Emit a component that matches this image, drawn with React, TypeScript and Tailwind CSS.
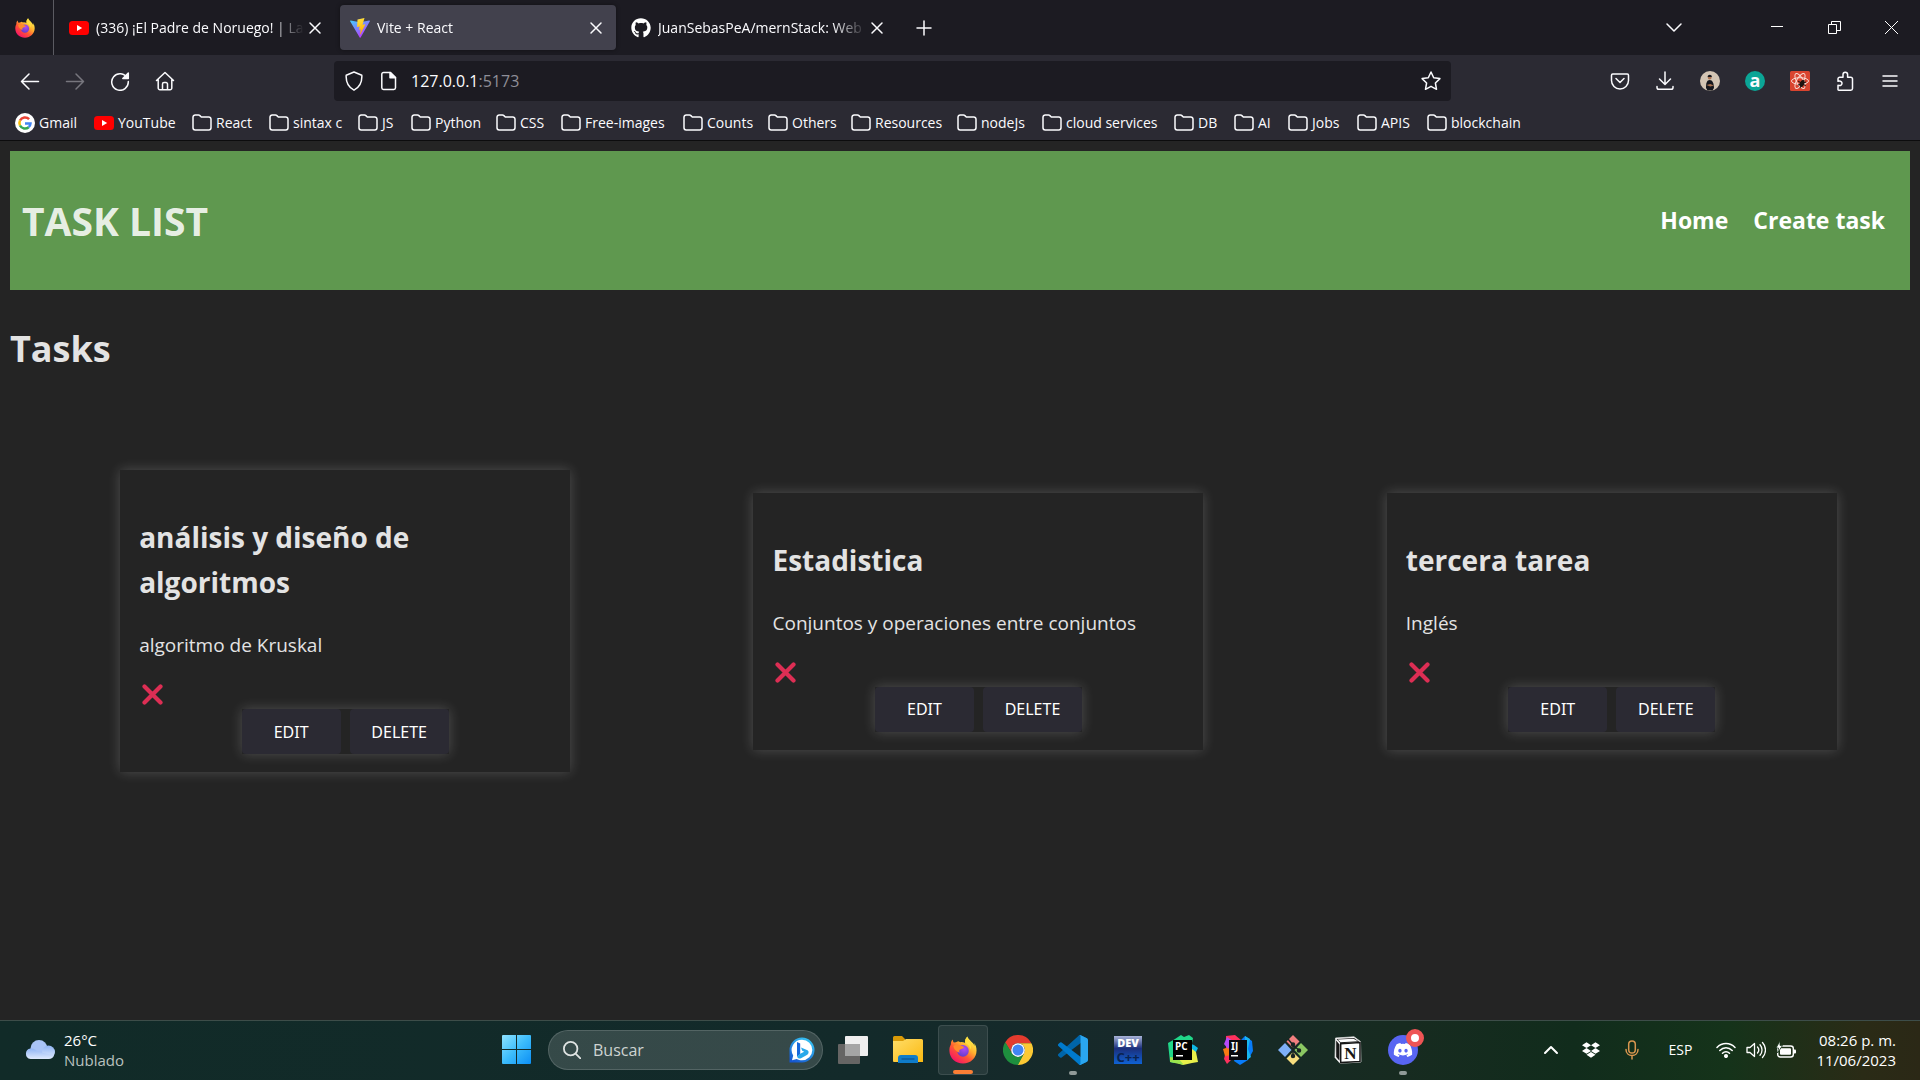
import React from 'react';
import { FaGithub, FaDropbox, FaDiscord } from 'react-icons/fa';

/* ---------- logos ---------- */

function Firefox({ className, id }: { className: string; id: string }) {
  return (
    <svg viewBox="0 0 32 32" className={className} aria-hidden="true">
      <defs>
        <linearGradient id={id + 'a'} x1="0.85" y1="0.1" x2="0.2" y2="0.95">
          <stop offset="0" stopColor="#fff44f" />
          <stop offset="0.35" stopColor="#ffb02e" />
          <stop offset="0.62" stopColor="#ff5634" />
          <stop offset="1" stopColor="#f5106a" />
        </linearGradient>
        <radialGradient id={id + 'b'} cx="0.6" cy="0.3" r="0.8">
          <stop offset="0" stopColor="#b24bf5" />
          <stop offset="1" stopColor="#5b3bc4" />
        </radialGradient>
      </defs>
      <path
        fill={'url(#' + id + 'a)'}
        d="M21 0.5C18.5 3 18 5.5 18.6 8c-2-1-3.600-1.200-5.600-1L10.500 6C8.700 7 7 7.500 5.500 7.500 4.600 6.500 4.300 5 4.500 4 2.500 5.500 2 7.500 2.200 9.500.8 12 .3 14.500.5 17.500.8 25.500 7.500 31.500 16 31.500S31.500 25 31.500 16.500c0-3.500-1-6.500-3-8.500.6 1.300.8 2.300.8 3.500C27.500 6.500 22.500 5 21 .5z"
      />
      <circle cx="16" cy="17" r="6.600" fill={'url(#' + id + 'b)'} />
      <path fill="#ff8a2b" d="M5 11.500c2.500-2 6-2 8.500-.5 1.800.2 3 .8 3.800 1.800-1 1.500-2.300 1.800-4 2.200-1.800.6-2 2.500-1 4-3-.5-6.500-3-7.300-7.500z" />
      <path fill="#ffdf3d" d="M18.600 8c2.500 1 5.400 3.500 5.900 7.500 1.500-3 .5-7-2-9.500-1.500-1.500-2-3-1.500-5.500-2.500 2.500-3 5-2.400 7.500z" />
    </svg>
  );
}

function YouTube() {
  return (
    <svg viewBox="0 0 20 20" className="size-5 shrink-0" aria-hidden="true">
      <rect y="3" width="20" height="14" rx="3.500" fill="#f00" />
      <path d="M8 7l5.200 3L8 13z" fill="#fff" />
    </svg>
  );
}

function ViteLogo() {
  return (
    <svg viewBox="0 0 32 32" className="size-5 shrink-0" aria-hidden="true">
      <defs>
        <linearGradient id="viteA" x1="0" y1="0" x2="0.6" y2="1">
          <stop offset="0" stopColor="#41d1ff" />
          <stop offset="1" stopColor="#bd34fe" />
        </linearGradient>
        <linearGradient id="viteB" x1="0.4" y1="0" x2="0.6" y2="1">
          <stop offset="0" stopColor="#ffea83" />
          <stop offset="0.1" stopColor="#ffdd35" />
          <stop offset="1" stopColor="#ffa800" />
        </linearGradient>
      </defs>
      <path fill="url(#viteA)" d="M31.800 5.200L17 31.300c-.3.600-1.200.6-1.500 0L.2 5.200c-.4-.6.2-1.300.9-1.200L16 6.800 30.900 4c.7-.1 1.200.6.900 1.200z" />
      <path fill="url(#viteB)" d="M23 0L12.300 2.200c-.2 0-.3.200-.3.400L11.300 13.800c0 .3.200.5.500.4l3-.7c.3 0 .5.200.5.5l-.9 4.400c-.1.300.2.500.5.400l1.900-.5c.300-.1.600.1.500.400l-1.400 6.900c-.1.400.5.700.7.300l7.700-15.200c.1-.3-.1-.6-.5-.5l-3.200.6c-.3.1-.5-.2-.4-.5l2.900-10c0-.2-.1-.4-.1-.3z" />
    </svg>
  );
}

function GoogleLogo() {
  return (
    <svg viewBox="0 0 20 20" className="size-5 shrink-0" aria-hidden="true">
      <circle cx="10" cy="10" r="10" fill="#fff" />
      <g fill="none" strokeWidth="2.500">
        <path d="M14.100 6.200A5.600 5.600 0 0 0 5 7.500" stroke="#ea4335" />
        <path d="M5 7.500a5.600 5.600 0 0 0 0 5" stroke="#fbbc05" />
        <path d="M5 12.500a5.600 5.600 0 0 0 8.700 1.700" stroke="#34a853" />
        <path d="M13.700 14.200A5.600 5.600 0 0 0 15.500 10.500H10" stroke="#4285f4" />
      </g>
    </svg>
  );
}

function Folder() {
  return (
    <svg viewBox="0 0 20 20" className="size-5 shrink-0" fill="none" stroke="#fbfbfe" strokeWidth="1.500" strokeLinejoin="round" aria-hidden="true">
      <path d="M1 4.200A2.200 2.200 0 0 1 3.200 2h3.300c.6 0 1 .2 1.400.6L9.300 4h7.500A2.200 2.200 0 0 1 19 6.200v8.600A2.200 2.200 0 0 1 16.800 17H3.200A2.200 2.200 0 0 1 1 14.800z" />
    </svg>
  );
}

/* ---------- browser chrome ---------- */

const line = {
  fill: 'none',
  stroke: 'currentColor',
  strokeWidth: 1.5,
  strokeLinecap: 'round' as const,
  strokeLinejoin: 'round' as const,
};

function Icon({ children, className = 'size-5' }: { children: React.ReactNode; className?: string }) {
  return (
    <svg viewBox="0 0 20 20" className={className} {...line} aria-hidden="true">
      {children}
    </svg>
  );
}

function ToolButton({ label, children, dim = false }: { label: string; children: React.ReactNode; dim?: boolean }) {
  return (
    <button aria-label={label} disabled={dim} className={dim ? 'flex size-10 items-center justify-center text-[#77767e]' : 'flex size-10 items-center justify-center'}>
      {children}
    </button>
  );
}

function Tab({ icon, title, active = false }: { icon: React.ReactNode; title: string; active?: boolean }) {
  return (
    <div className={active ? 'flex h-[45px] w-[276px] items-center gap-[7px] rounded bg-[#42414d] px-2.5 shadow-[0_0_4px_rgba(0,0,0,0.4)]' : 'flex h-[45px] w-[276px] items-center gap-[7px] px-2.5'}>
      {icon}
      <span className="min-w-0 flex-1 whitespace-nowrap [mask-image:linear-gradient(to_right,black_84%,transparent)]">{title}</span>
      <button aria-label="Cerrar pestaña" className="-ml-1.5 flex size-5 items-center justify-center">
        <Icon>
          <path d="M5 5l10 10M15 5L5 15" />
        </Icon>
      </button>
    </div>
  );
}

function TabStrip() {
  return (
    <div className="flex h-[55px] bg-[#1c1b22]">
      <div className="flex w-[54px] items-center border-r border-[#5b5b62] pl-[15px]">
        <Firefox className="size-5" id="ffTab" />
      </div>
      <div className="flex flex-1 items-center gap-[5px] pl-[5px]">
        <Tab icon={<YouTube />} title="(336) ¡El Padre de Noruego! | La" />
        <Tab icon={<ViteLogo />} title="Vite + React" active />
        <Tab icon={<FaGithub className="size-5 shrink-0 text-white" />} title="JuanSebasPeA/mernStack: Web" />
        <button aria-label="Nueva pestaña" className="ml-0.5 flex size-10 items-center justify-center">
          <Icon>
            <path d="M10 3v14M3 10h14" />
          </Icon>
        </button>
      </div>
      <div className="flex items-center">
        <button aria-label="Lista de pestañas" className="mr-[55px] flex size-10 items-center justify-center">
          <Icon>
            <path d="M3 6l7 7 7-7" />
          </Icon>
        </button>
        <button aria-label="Minimizar" className="flex h-[55px] w-[57px] items-center justify-center">
          <svg viewBox="0 0 13 13" className="size-[13px]" stroke="#fff" aria-hidden="true"><path d="M0 5.500h12" /></svg>
        </button>
        <button aria-label="Restaurar" className="flex h-[55px] w-[57px] items-center justify-center">
          <svg viewBox="0 0 13 13" className="size-[13px]" stroke="#fff" fill="none" aria-hidden="true">
            <path d="M.5 3.500h8v9h-8zM3.500 3.500v-3h9v9h-4" />
          </svg>
        </button>
        <button aria-label="Cerrar" className="flex h-[55px] w-[57px] items-center justify-center">
          <svg viewBox="0 0 13 13" className="size-[13px]" stroke="#fff" aria-hidden="true"><path d="M0 0l13 13M13 0L0 13" /></svg>
        </button>
      </div>
    </div>
  );
}

function Toolbar() {
  return (
    <div className="flex h-[51px] items-center bg-[#2b2a33]">
      <div className="flex w-[334px] gap-[5px] pl-2.5">
        <ToolButton label="Atrás"><Icon><path d="M1.500 10.500h17M9 3L1.500 10.500 9 18" /></Icon></ToolButton>
        <ToolButton label="Adelante" dim><Icon><path d="M18.500 10.500h-17M11 3l7.500 7.500L11 18" /></Icon></ToolButton>
        <ToolButton label="Recargar">
          <Icon><path d="M17.300 7A8.300 8.300 0 1 0 18.300 10.500" /><path d="M18.300 2v5.500h-5.500z" fill="currentColor" /></Icon>
        </ToolButton>
        <ToolButton label="Inicio">
          <Icon><path d="M1.500 9.500L10 1.500l8.500 8M3.200 8.500V17A1.700 1.700 0 0 0 5 18.700h10A1.700 1.700 0 0 0 16.800 17V8.500M7.500 18.500V13a1.500 1.500 0 0 1 1.500-1.500h2a1.500 1.500 0 0 1 1.500 1.500v5.500" /></Icon>
        </ToolButton>
      </div>
      <div className="flex h-10 min-w-0 flex-1 items-center rounded bg-[#1c1b22] px-2.5">
        <Icon className="size-5 shrink-0"><path d="M10 1L17.800 4.200c.3 4.500-.3 11-7.800 15C2.500 15.200 1.900 8.700 2.200 4.200z" /></Icon>
        <Icon className="ml-[15px] size-5 shrink-0">
          <path d="M4.500 1.500h7l5 5v10.300a1.700 1.700 0 0 1-1.700 1.700H4.500a1.700 1.700 0 0 1-1.700-1.700V3.200a1.700 1.700 0 0 1 1.700-1.700z" />
          <path d="M11 1.500v5.300h5.500z" fill="currentColor" />
        </Icon>
        <p className="ml-3 flex-1 text-base">
          127.0.0.1<span className="text-[#8f8f98]">:5173</span>
        </p>
        <button aria-label="Agregar a marcadores">
          <Icon><path d="M10 1l2.700 5.700 6.200.9-4.500 4.400 1.100 6.300-5.500-3-5.500 3 1.100-6.300L1.100 7.600l6.200-.9z" /></Icon>
        </button>
      </div>
      <div className="ml-[149px] flex gap-[5px] pr-2.5">
        <ToolButton label="Pocket"><Icon><path d="M2.700 3h14.600A1.200 1.200 0 0 1 18.500 4.200V9.500a8.500 8.500 0 0 1-17 0V4.200A1.200 1.200 0 0 1 2.700 3zM6 7.500l4 4 4-4" /></Icon></ToolButton>
        <ToolButton label="Descargas"><Icon><path d="M10 1v12M4.500 8l5.500 5.500L15.500 8M2 15.500v1A1.800 1.800 0 0 0 3.800 18.300h12.400A1.800 1.800 0 0 0 18 16.500v-1" /></Icon></ToolButton>
        <ToolButton label="Perfil">
          <svg viewBox="0 0 20 20" className="size-5" aria-hidden="true">
            <circle cx="10" cy="10" r="10" fill="#d3c4b3" />
            <path d="M6 17c0-5 .8-8 3.700-8s4 3 4.300 8l-1.500 2.500h-5z" fill="#15161c" />
            <circle cx="9.700" cy="6.500" r="1.900" fill="#a9714f" />
            <path d="M7.600 6c0-3 4.400-3 4.200 0z" fill="#15161c" />
            <path d="M6.500 14l3.800-1 3.500 1.500-3.500 1z" fill="#a9714f" />
          </svg>
        </ToolButton>
        <ToolButton label="Extensión a">
          <span className="flex size-5 items-center justify-center rounded-full bg-[#0ba596] pb-0.5 text-lg leading-5 font-bold">a</span>
        </ToolButton>
        <ToolButton label="React DevTools">
          <svg viewBox="0 0 20 20" className="size-5" aria-hidden="true">
            <rect width="20" height="20" rx="1.500" fill="#d9442f" />
            <g fill="none" stroke="#f8dcd6" strokeWidth="1">
              <ellipse cx="10" cy="10" rx="8.500" ry="3.300" />
              <ellipse cx="10" cy="10" rx="8.500" ry="3.300" transform="rotate(60 10 10)" />
              <ellipse cx="10" cy="10" rx="8.500" ry="3.300" transform="rotate(120 10 10)" />
            </g>
            <ellipse cx="12" cy="12.500" rx="2.200" ry="3.600" fill="#20130f" transform="rotate(25 12 12.500)" />
            <path d="M8 10l8 5M8 14l8-3M10 17l4-8" stroke="#20130f" />
          </svg>
        </ToolButton>
        <ToolButton label="Extensiones">
          <Icon><path d="M3 18.500v-4.200c3 .8 4-.8 4-2s-1-2.800-4-2V8A1.700 1.700 0 0 1 4.700 6.300H8V3.500a2.300 2.300 0 0 1 4.600 0v2.800h3.200A1.700 1.700 0 0 1 17.500 8v9.500a1.700 1.700 0 0 1-1.700 1.700H3.700A.7.7 0 0 1 3 18.500z" /></Icon>
        </ToolButton>
        <ToolButton label="Menú"><Icon><path d="M3 5h14M3 10h14M3 15h14" /></Icon></ToolButton>
      </div>
    </div>
  );
}

const bookmarks: { name: string; width: string; icon?: React.ReactNode }[] = [
  { name: 'Gmail', width: 'w-[79px]', icon: <GoogleLogo /> },
  { name: 'YouTube', width: 'w-[98px]', icon: <YouTube /> },
  { name: 'React', width: 'w-[77px]' },
  { name: 'sintax c', width: 'w-[89px]' },
  { name: 'JS', width: 'w-[53px]' },
  { name: 'Python', width: 'w-[85px]' },
  { name: 'CSS', width: 'w-[65px]' },
  { name: 'Free-images', width: 'w-[122px]' },
  { name: 'Counts', width: 'w-[85px]' },
  { name: 'Others', width: 'w-[83px]' },
  { name: 'Resources', width: 'w-[106px]' },
  { name: 'nodeJs', width: 'w-[85px]' },
  { name: 'cloud services', width: 'w-[132px]' },
  { name: 'DB', width: 'w-[60px]' },
  { name: 'AI', width: 'w-[54px]' },
  { name: 'Jobs', width: 'w-[69px]' },
  { name: 'APIS', width: 'w-[70px]' },
  { name: 'blockchain', width: 'w-[110px]' },
];

function BookmarksBar() {
  return (
    <nav aria-label="Marcadores" className="flex h-[35px] items-center border-b border-[#0c0c0d] bg-[#2b2a33] pl-[15px]">
      {bookmarks.map((b) => (
        <a key={b.name} href="#" className={'flex shrink-0 items-center gap-1 whitespace-nowrap ' + b.width}>
          {b.icon ?? <Folder />}
          {b.name}
        </a>
      ))}
    </nav>
  );
}

/* ---------- page ---------- */

const tasks = [
  { title: 'análisis y diseño de algoritmos', description: 'algoritmo de Kruskal' },
  { title: 'Estadistica', description: 'Conjuntos y operaciones entre conjuntos' },
  { title: 'tercera tarea', description: 'Inglés' },
];

function TaskCard({ title, description }: { title: string; description: string }) {
  return (
    <article className="w-[450px] px-[19px] pt-[45px] pb-[18px] shadow-[0_0_12px_rgba(255,255,255,0.2)]">
      <h2 className="mb-[25px] pr-10 text-[28px] leading-[45px] font-bold">{title}</h2>
      <p className="mb-5 text-[19px] leading-[30px]">{description}</p>
      <div className="flex h-[29px] items-center pl-[3px]" role="img" aria-label="Pendiente">
        <svg viewBox="0 0 21 21" className="size-[21px]" stroke="#dd2e54" strokeWidth="4.200" strokeLinecap="round" aria-hidden="true">
          <path d="M2.500 2.500l16 16M18.500 2.500l-16 16" />
        </svg>
      </div>
      <div className="mx-auto flex w-fit gap-[9px] font-['Noto_Sans',sans-serif] text-base text-white shadow-[0_0_12px_rgba(255,255,255,0.2)]">
        <button className="h-[45px] w-[99px] rounded bg-[#2b2a33]">EDIT</button>
        <button className="h-[45px] w-[99px] rounded bg-[#2b2a33]">DELETE</button>
      </div>
    </article>
  );
}

function TasksPage() {
  return (
    <main className="flex-1 bg-[#242424] p-2.5 text-[#e3e3e3]">
      <header className="flex h-[139px] items-center justify-between bg-[#5f984f] pr-[25px] pl-3 text-white">
        <h1 className="text-[39px] leading-[60px] font-bold text-white/87">TASK LIST</h1>
        <nav aria-label="Principal" className="flex gap-[25px] text-[23px] font-bold">
          <a href="#">Home</a>
          <a href="#">Create task</a>
        </nav>
      </header>
      <h1 className="mt-[29px] text-[36px] leading-[60px] font-bold">Tasks</h1>
      <div className="mt-[91px] grid grid-cols-3 items-center">
        {tasks.map((t) => (
          <div key={t.title} className="flex justify-center pl-[37px]">
            <TaskCard {...t} />
          </div>
        ))}
      </div>
    </main>
  );
}

/* ---------- taskbar ---------- */

function Tile({ label, children, state = 'idle' }: { label: string; children: React.ReactNode; state?: 'idle' | 'open' | 'active' }) {
  return (
    <button
      aria-label={label}
      className={state === 'active' ? 'relative flex size-[50px] items-center justify-center rounded border border-white/10 bg-white/8' : 'relative flex size-[50px] items-center justify-center'}
    >
      {children}
      {state === 'active' && <span className="absolute inset-x-3.5 bottom-0 h-1 rounded-full bg-[#fb7f35]" />}
      {state === 'open' && <span className="absolute inset-x-[21px] bottom-0 h-1 rounded-full bg-[#909a98]" />}
    </button>
  );
}

function WindowsLogo() {
  return (
    <svg viewBox="0 0 29 29" className="size-[29px]" aria-hidden="true">
      <defs>
        <linearGradient id="win" x1="0" y1="0" x2="29" y2="29" gradientUnits="userSpaceOnUse">
          <stop offset="0" stopColor="#8ee3ff" />
          <stop offset="0.5" stopColor="#3cbcfb" />
          <stop offset="1" stopColor="#0c8ff5" />
        </linearGradient>
      </defs>
      <path fill="url(#win)" d="M0 1a1 1 0 0 1 1-1h13v14H0zM15 0h13a1 1 0 0 1 1 1v13H15zM0 15h14v14H1a1 1 0 0 1-1-1zM15 15h14v13a1 1 0 0 1-1 1H15z" />
    </svg>
  );
}

function BingLogo() {
  return (
    <svg viewBox="0 0 26 26" className="size-[26px] shrink-0" aria-hidden="true">
      <defs>
        <linearGradient id="bing" x1="0.8" y1="0" x2="0.2" y2="1">
          <stop offset="0" stopColor="#38c8f4" />
          <stop offset="1" stopColor="#1556d0" />
        </linearGradient>
      </defs>
      <path fill="url(#bing)" d="M13 .5A12.500 12.500 0 1 1 13 25.500H.5V13A12.500 12.500 0 0 1 13 .5z" />
      <path fill="#fff" d="M13 2.700A10.300 10.300 0 1 1 13 23.300c-2 0-3.800-.5-5.300-1.400L3 23.200l1.200-4.800A10.300 10.300 0 0 1 13 2.700z" />
      <path fill="#1668dc" d="M8 5l3.200 1.500v10.800L8 19.500z" />
      <path fill="#28a8ea" d="M8 19.500l3.200-2.700 4-2-2-1-1.200-3.200 6.500 2.600c1.800 1.200 1.200 3.600-.2 4.500l-6.300 3.500c-1.600.9-3.200.2-4-1.700z" />
    </svg>
  );
}

function TaskViewIcon() {
  return (
    <svg viewBox="0 0 30 28" className="h-7 w-[30px]" aria-hidden="true">
      <rect y="8" width="22" height="20" rx="1" fill="#666564" />
      <rect x="7" width="23" height="20" rx="1" fill="#efefef" />
      <rect x="7" y="8" width="15" height="12" fill="#a5a5a5" />
    </svg>
  );
}

function ExplorerIcon() {
  return (
    <svg viewBox="0 0 30 27" className="h-[27px] w-[30px]" aria-hidden="true">
      <defs>
        <linearGradient id="fold" x1="0" y1="0" x2="1" y2="1">
          <stop offset="0" stopColor="#ffdd68" />
          <stop offset="1" stopColor="#fbb911" />
        </linearGradient>
      </defs>
      <path d="M0 1.500A1.500 1.500 0 0 1 1.500 0H9l3 3v3H0z" fill="#d99a07" />
      <path d="M0 5h10l3-2h15.500A1.500 1.500 0 0 1 30 4.500V26H1a1 1 0 0 1-1-1z" fill="url(#fold)" />
      <path d="M5 27v-5a3 3 0 0 1 3-3h14a3 3 0 0 1 3 3v5z" fill="#0f7cc9" />
      <path d="M8.500 23h13" stroke="#0a5190" strokeWidth="1.200" />
    </svg>
  );
}

function ChromeIcon() {
  return (
    <svg viewBox="0 0 48 48" className="size-[30px]" aria-hidden="true">
      <path fill="#e33b2e" d="M3.200 12A24 24 0 0 1 44.800 12L44.800 13H24A11 11 0 0 0 14.500 29.500z" />
      <path fill="#fcc934" d="M44.800 12A24 24 0 0 1 24 48L23.500 47 33.500 29.500A11 11 0 0 0 24 13H45.300z" />
      <path fill="#1e8e3e" d="M3.200 12A24 24 0 0 0 24 48L33.500 29.500A11 11 0 0 1 14.500 29.500L3.900 11.500z" />
      <circle cx="24" cy="24" r="11" fill="#fff" />
      <circle cx="24" cy="24" r="8.800" fill="#4285f4" />
    </svg>
  );
}

function VsCodeIcon() {
  return (
    <svg viewBox="0 0 100 100" className="size-[30px]" aria-hidden="true">
      <path fill="#0065a9" d="M96.500 10.800L75.900.9a6.200 6.200 0 0 0-7.100 1.200L1.300 63.600a4.200 4.200 0 0 0 0 6.200l5.500 5a4.200 4.200 0 0 0 5.300.2L93.400 13.400A4 4 0 0 1 100 16.700v-.2a6.300 6.300 0 0 0-3.500-5.700z" />
      <path fill="#007acc" d="M96.500 89.200l-20.600 9.900a6.200 6.200 0 0 1-7.100-1.200L1.300 36.400a4.200 4.200 0 0 1 0-6.200l5.500-5a4.200 4.200 0 0 1 5.300-.2l81.300 61.600a4 4 0 0 0 6.600-3.300v.2a6.300 6.300 0 0 1-3.500 5.700z" />
      <path fill="#2aa6f0" d="M75.900 99.100a6.200 6.200 0 0 1-7.100-1.200c2.300 2.300 6.200.7 6.200-2.600V4.700c0-3.300-3.900-4.900-6.200-2.600A6.200 6.200 0 0 1 75.900.9l20.600 9.900a6.300 6.300 0 0 1 3.500 5.700v67a6.300 6.300 0 0 1-3.500 5.700z" />
    </svg>
  );
}

function DevCppIcon() {
  return (
    <span className="flex size-7 flex-col items-center justify-center bg-[linear-gradient(#a9b4d8,#1b2f7c_45%,#0f62d4)]">
      <span className="text-[11px] leading-[14px] font-extrabold text-white">DEV</span>
      <span className="text-[13px] leading-[14px] font-bold text-[#0a2350]">C++</span>
    </span>
  );
}

function PyCharmIcon() {
  return (
    <svg viewBox="0 0 30 30" className="size-[30px]" aria-hidden="true">
      <path fill="#21d789" d="M0 8l7-4 6-4 3 2 5-2 4 3-2 10-17 15L2 27z" />
      <path fill="#0fb8e6" d="M23 9l3 1 4 3-3 6-5 1z" />
      <path fill="#e9f04a" d="M24 14l4 3 2 10-6 1-9 2-8-3 3-8z" />
      <path fill="#9be34d" d="M2 22l8 1 6 7-14-3z" />
      <rect x="5" y="5" width="19" height="20" fill="#000" />
      <text x="7" y="15" fontSize="10" fontWeight="700" fill="#fff" fontFamily="Open Sans, sans-serif">PC</text>
      <rect x="8" y="20" width="7" height="1.500" fill="#fff" />
    </svg>
  );
}

function IntelliJIcon() {
  return (
    <svg viewBox="0 0 30 30" className="size-[30px]" aria-hidden="true">
      <path fill="#fe315d" d="M3 1l9-1 6 5-6 16-8 8-3-5 2-8z" />
      <path fill="#f97a12" d="M0 14l6-2 3 8-7 1z" />
      <path fill="#b74af7" d="M4 2l6 4-5 8-4-5z" />
      <path fill="#087cfa" d="M18 5l4-4 7 5 1 10-5 9-8 5-6-4z" />
      <path fill="#19b5f1" d="M22 1l5 3-2 10 3 8-4 3-2-13z" />
      <rect x="6" y="5" width="18" height="20" fill="#0a0a10" />
      <text x="8" y="15" fontSize="10" fontWeight="700" fill="#fff" fontFamily="Noto Sans, sans-serif">IJ</text>
      <rect x="8" y="20" width="7" height="1.500" fill="#fff" />
    </svg>
  );
}

function GitIcon() {
  return (
    <svg viewBox="0 0 30 30" className="size-[30px]" aria-hidden="true">
      <path fill="#f27f7f" d="M15 0l6.500 6.500L15 13 8.500 6.500z" />
      <path fill="#7fb0f7" d="M7 8l6.500 7L7 22 0 15z" />
      <path fill="#8bc763" d="M23 8l7 7-7 7-6.500-7z" />
      <path fill="#f8de7e" d="M15 17l6.500 6.500L15 30l-6.500-6.500z" />
      <g stroke="#1a2524" strokeWidth="1.500" fill="#1a2524">
        <path d="M10 4l5 6v12M15 10.500l6 4.500" fill="none" />
        <circle cx="15" cy="9.500" r="1.500" />
        <circle cx="15" cy="21" r="1.500" />
        <circle cx="21" cy="15.500" r="1.500" />
      </g>
    </svg>
  );
}

function NotionIcon() {
  return (
    <svg viewBox="0 0 28 28" className="size-7" aria-hidden="true">
      <path d="M1.500 2L20 .8 26.500 5.500 27 26 6 27.300 1 21.500z" fill="#fff" stroke="#d8d8d8" strokeWidth="0.800" />
      <path d="M2.500 3L20 2l5.500 4-19 1.200zM2.200 4.500L5.500 8.500v16.300L2.200 21z" fill="#161616" />
      <path d="M3.500 3.500l3 2.800 17.500-1.100L19.500 2.700z" fill="#fff" />
      <path d="M6.700 7.800L26 6.600V25.400L6.700 26.600z" fill="#fff" stroke="#161616" strokeWidth="1.500" />
      <text x="16.300" y="22.500" textAnchor="middle" fontSize="17" fontWeight="700" fill="#161616" fontFamily="Liberation Serif, serif">N</text>
    </svg>
  );
}

function CloudIcon() {
  return (
    <svg viewBox="0 0 30 20" className="h-5 w-[30px]" aria-hidden="true">
      <defs>
        <linearGradient id="cloud" x1="0" y1="0" x2="0" y2="1">
          <stop offset="0" stopColor="#8fb4f4" />
          <stop offset="1" stopColor="#dfeafd" />
        </linearGradient>
      </defs>
      <circle cx="14" cy="8.500" r="8.500" fill="#a9c4f7" />
      <circle cx="23.500" cy="12" r="6.500" fill="url(#cloud)" />
      <path d="M5.500 8.500c3-.5 5.500 1 7 3L23 14l6 1c-.5 2.500-2.500 4-5.500 4h-18A5.300 5.300 0 0 1 5.500 8.500z" fill="url(#cloud)" />
    </svg>
  );
}

function Taskbar() {
  return (
    <footer className="flex h-[60px] items-center border-t border-[#3d4d49] bg-[linear-gradient(90deg,#112b28_0%,#132a2a_45%,#17292a_60%,#172b20_73%,#112c1c_82%,#15331a_90%,#2a2b16_97%,#2b2816_100%)] pb-0.5 text-[15px] text-white">
      <div className="flex flex-1 items-center gap-[9px] pl-[25px]">
        <CloudIcon />
        <p className="leading-5">
          26°C
          <br />
          <span className="text-[#b9c1bf]">Nublado</span>
        </p>
      </div>
      <div className="flex items-center gap-[5px] pr-0.5">
        <Tile label="Inicio"><WindowsLogo /></Tile>
        <label className="ml-0.5 flex h-10 w-[275px] items-center rounded-full border border-white/15 bg-white/15 pr-[7px] pl-3.5">
          <Icon className="size-[18px] shrink-0 text-[#dfe3e2] [stroke-width:2]"><circle cx="8.500" cy="8.500" r="7.500" /><path d="M14 14l5.500 5.500" /></Icon>
          <input aria-label="Buscar" placeholder="Buscar" className="ml-3 min-w-0 flex-1 bg-transparent text-base outline-none placeholder:text-[#ced4d2]" />
          <BingLogo />
        </label>
        <Tile label="Vista de tareas"><TaskViewIcon /></Tile>
        <Tile label="Explorador de archivos"><ExplorerIcon /></Tile>
        <Tile label="Firefox" state="active"><Firefox className="size-7" id="ffBar" /></Tile>
        <Tile label="Chrome"><ChromeIcon /></Tile>
        <Tile label="Visual Studio Code" state="open"><VsCodeIcon /></Tile>
        <Tile label="Dev-C++"><DevCppIcon /></Tile>
        <Tile label="PyCharm"><PyCharmIcon /></Tile>
        <Tile label="IntelliJ IDEA"><IntelliJIcon /></Tile>
        <Tile label="Git"><GitIcon /></Tile>
        <Tile label="Notion"><NotionIcon /></Tile>
        <Tile label="Discord" state="open">
          <span className="flex size-[30px] items-center justify-center rounded-full bg-[#5865f2]">
            <FaDiscord className="size-5 text-white" />
          </span>
          <span className="absolute top-1 right-1 size-[18px] rounded-full border-[5px] border-[#ee5555] bg-white" />
        </Tile>
      </div>
      <div className="flex flex-1 items-center justify-end pr-6">
        <button aria-label="Iconos ocultos" className="mr-[23px]">
          <svg viewBox="0 0 16 16" className="size-4" {...line} strokeWidth={2} aria-hidden="true"><path d="M2 11l6-6 6 6" /></svg>
        </button>
        <FaDropbox className="mr-[25px] size-[18px]" aria-hidden="true" />
        <svg viewBox="0 0 14 20" className="mr-[29px] h-5 w-3.5" {...line} stroke="#d9964f" aria-hidden="true">
          <rect x="3.700" y="1" width="6.600" height="12" rx="3.300" />
          <path d="M1 9.500c0 8 12 8 12 0M7 15.500V19" />
        </svg>
        <button className="mr-6 text-sm">ESP</button>
        <svg viewBox="0 0 20 16" className="mr-2.5 h-4 w-5" {...line} aria-hidden="true">
          <path d="M1 5.500C6 .3 14 .3 19 5.500M3.800 8.500c3.500-3.700 8.900-3.700 12.400 0M6.500 11.300c2-2 5-2 7 0" />
          <circle cx="10" cy="14" r="1.300" fill="currentColor" />
        </svg>
        <svg viewBox="0 0 20 18" className="mr-2.5 h-[18px] w-5" {...line} strokeWidth={1.3} aria-hidden="true">
          <path d="M1 6.500h3L8.500 2.500v13L4 11.500H1zM11.500 6c1.500 1.700 1.500 4.300 0 6M14 3.800c2.700 3 2.700 7.400 0 10.400M16.500 1.500c4 4.500 4 10.500 0 15" />
        </svg>
        <svg viewBox="0 0 20 18" className="mr-5 h-[18px] w-5" aria-hidden="true">
          <rect x="1.700" y="5" width="15.600" height="11" rx="2.500" fill="none" stroke="#fff" strokeWidth="1.400" />
          <rect x="4" y="7.300" width="11" height="6.500" rx="1" fill="#fff" />
          <path d="M18 8.500h1a1 1 0 0 1 1 1v2a1 1 0 0 1-1 1h-1z" fill="#fff" />
          <path d="M4 0L0 7h2.500L1.500 12 6.500 4.500H4z" fill="#fff" stroke="#16331a" strokeWidth="0.800" />
        </svg>
        <p className="text-right leading-5 whitespace-nowrap">
          08:26 p. m.
          <br />
          11/06/2023
        </p>
      </div>
    </footer>
  );
}

export default function App() {
  return (
    <div className="flex min-h-screen flex-col bg-[#242424] font-['Open_Sans',sans-serif]">
      <div className="text-sm text-[#fbfbfe]">
        <TabStrip />
        <Toolbar />
        <BookmarksBar />
      </div>
      <TasksPage />
      <Taskbar />
    </div>
  );
}
